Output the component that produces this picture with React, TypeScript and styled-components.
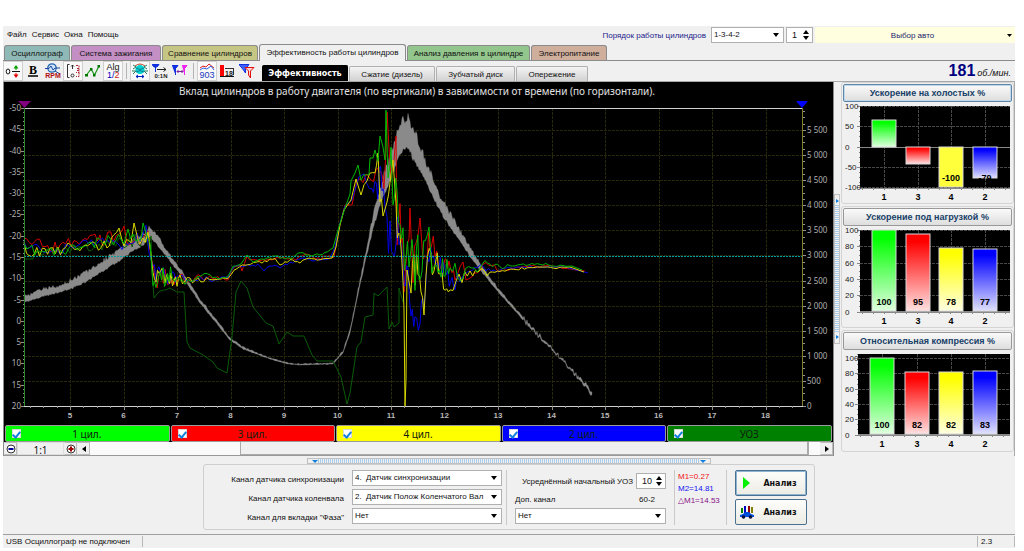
import React from "react";
import styled, { createGlobalStyle, css } from "styled-components";

const GlobalStyle = createGlobalStyle`
  * { box-sizing: border-box; }
  body { margin: 0; background: #fff; font-family: "Liberation Sans", Arial, sans-serif; font-size: 8px; color: #111; }
  button, select, input { font: inherit; color: inherit; margin: 0; }
  svg { display: block; }
`;

const Page = styled.div`padding: 26px 9px 4px 3px;`;
const AppWindow = styled.div`
  display: flex;
  flex-direction: column;
  background: #f0f0f0;
`;

/* ---------- menu row ---------- */
const TopRow = styled.header`
  display: flex;
  align-items: center;
  height: 18px;
`;
const Menu = styled.nav`
  display: flex;
  flex: 1;
  gap: 5px;
  padding-left: 4px;
`;
const MenuItem = styled.button`
  border: 0;
  padding: 0;
  background: none;
  line-height: 12px;
`;
const OrderLabel = styled.label`
  color: #1c1c8c;
  margin-right: 5px;
`;
const OrderFields = styled.div`
  display: flex;
  gap: 2px;
`;
const SelectBox = styled.div<{ $w?: number }>`
  position: relative;
  width: ${(p) => (p.$w ? p.$w + "px" : "100%")};
  height: 16px;
  &::after {
    content: "";
    position: absolute;
    right: 5px;
    top: 6px;
    border: 3px solid transparent;
    border-top: 4px solid #000;
    border-bottom: 0;
    pointer-events: none;
  }
`;
const Select = styled.select`
  appearance: none;
  display: block;
  width: 100%;
  height: 16px;
  padding: 0 12px 0 2px;
  border: 1px solid #b0b0b0;
  border-radius: 0;
  background: #fff;
  line-height: 14px;
`;
const SpinBox = styled.div<{ $w: number }>`
  display: flex;
  align-items: center;
  width: ${(p) => p.$w}px;
  height: 16px;
  padding: 0 3px 0 5px;
  border: 1px solid #b0b0b0;
  background: #fff;
`;
const SpinInput = styled.input`
  flex: 1;
  min-width: 0;
  width: 100%;
  border: 0;
  padding: 0;
  background: none;
  font-size: 9px;
  outline: none;
`;
const CarButton = styled.button`
  display: flex;
  align-items: center;
  width: 200px;
  height: 16px;
  padding: 0 3px;
  border: 0;
  border-radius: 2px 0 0 2px;
  background: #ffffe0;
  color: #1c1c6c;
  span { flex: 1; text-align: center; }
`;

/* ---------- tabs ---------- */
const TabRow = styled.div`
  display: flex;
  align-items: flex-end;
  gap: 1px;
  height: 17px;
  padding-left: 1px;
  border-bottom: 1px solid #8c8c8c;
`;
const Tab = styled.button<{ $w: number; $c: string; $on?: boolean }>`
  width: ${(p) => p.$w}px;
  height: 15px;
  padding: 0;
  border: 1px solid #8a8a8a;
  border-bottom: 0;
  border-radius: 3px 3px 0 0;
  background: ${(p) => p.$c};
  white-space: nowrap;
  ${(p) => p.$on && css`height: 17px; margin-bottom: -1px; padding-bottom: 2px;`}
`;

/* ---------- toolbar ---------- */
const Toolbar = styled.div`
  display: flex;
  align-items: stretch;
  height: 21px;
  border-bottom: 1px solid #a8a8a8;
`;
const Tool = styled.button<{ $on?: boolean }>`
  display: flex;
  align-items: center;
  justify-content: center;
  width: 20px;
  padding: 0;
  border: 1px solid ${(p) => (p.$on ? "#d0d0d0" : "transparent")};
  background: ${(p) => (p.$on ? "#f9f9f9" : "none")};
`;
const ToolGap = styled.div`
  width: 1px;
  margin: 2px 3px;
  background: #b4b4b4;
`;
const SubTabs = styled.div`
  display: flex;
  flex: 1;
  align-items: flex-end;
  gap: 1px;
  padding-left: 5px;
`;
const SubTab = styled.button<{ $w: number; $on?: boolean }>`
  width: ${(p) => p.$w}px;
  height: 15px;
  padding: 0;
  border: 1px solid #b0b0b0;
  border-bottom: 0;
  border-radius: 2px 2px 0 0;
  background: linear-gradient(#f4f4f4, #d2d2d2);
  ${(p) => p.$on && css`
    height: 16px;
    border-color: #000;
    background: #000;
    color: #fff;
    font: bold 8px "DejaVu Sans", sans-serif;
  `}
`;
const Rpm = styled.div`
  display: flex;
  align-items: baseline;
  gap: 2px;
  padding-right: 4px;
  font-size: 9px;
  font-style: italic;
  b { font-size: 16px; line-height: 20px; color: #000080; font-style: normal; }
`;

/* ---------- main area ---------- */
const Main = styled.main`
  display: flex;
  align-items: stretch;
`;
const ChartColumn = styled.section`
  flex: 1;
  min-width: 0;
  border-left: 1px solid #8c8c8c;
  border-right: 1px solid #8c8c8c;
`;
const Black = styled.div`background: #000;`;
const Legend = styled.div`
  display: flex;
  gap: 1px;
  padding: 1px 1px 0;
`;
const LegendItem = styled.label<{ $c: string }>`
  display: flex;
  flex: 1;
  align-items: center;
  height: 17px;
  padding: 0 6px;
  border: 1px solid #9a9a9a;
  border-radius: 2px;
  background: ${(p) => p.$c};
  color: #102010;
  font: 10px "Noto Sans", sans-serif;
  span { flex: 1; text-align: center; padding-right: 10px; }
`;
const Check = styled.input`
  appearance: none;
  display: flex;
  justify-content: center;
  width: 9px;
  height: 9px;
  border: 1px solid #d8d8d8;
  background: #fff;
  &:checked::after {
    content: "";
    width: 3px;
    height: 6px;
    border: solid #1080e0;
    border-width: 0 2px 2px 0;
    transform: rotate(40deg);
  }
`;
const ScrollRow = styled.div`
  display: flex;
  height: 14px;
  border-bottom: 1px solid #999;
  background: #fafafa;
`;
const ZoomButton = styled.button`
  display: flex;
  align-items: center;
  justify-content: center;
  width: 13px;
  padding: 0;
  border: 1px solid #bbb;
  border-left-color: #eee;
  background: #f0f0f0;
`;
const ZoomValue = styled.output`
  width: 47px;
  text-align: center;
  background: #f0f0f0;
  border: 1px solid #ddd;
  font: 10px/14px "Noto Sans", sans-serif;
`;
const Track = styled.div`
  display: flex;
  flex: 1;
  padding-left: 150px;
  padding-right: 11px;
`;
const Thumb = styled.div`
  flex: 1;
  border: 1px solid #aaa;
  border-width: 0 2px 1px 1px;
  background: #f0f0f0;
`;
const SideSplit = styled.div`
  align-self: center;
  display: flex;
  flex-direction: column;
  justify-content: space-between;
  width: 6px;
  height: 150px;
  padding: 4px 1px;
  border: 1px solid #c0c0c0;
  background: linear-gradient(#f0f0f0, #f0f0f0) top / 100% 10px no-repeat,
    linear-gradient(#f0f0f0, #f0f0f0) bottom / 100% 10px no-repeat,
    repeating-linear-gradient(#a8cdec 0 1px, #f0f0f0 1px 2px);
`;
const SideArrow = styled.i`
  border: 2px solid transparent;
  border-left: 3px solid #1080e0;
  border-right: 0;
  width: 3px;
`;
const SidePanel = styled.aside`
  display: flex;
  flex-direction: column;
  gap: 2px;
  width: 175px;
  padding-left: 1px;
  border-right: 1px solid #aaa;
`;
const Card = styled.section`
  padding: 1px;
  border: 1px solid #d4d4d4;
  border-radius: 3px;
`;
const CardButton = styled.button<{ $on?: boolean }>`
  display: block;
  width: 100%;
  height: 18px;
  padding: 0;
  border: 1px solid ${(p) => (p.$on ? "#5f86a8" : "#999")};
  border-radius: 2px;
  background: linear-gradient(#fafafa, #dedede);
  box-shadow: ${(p) => (p.$on ? "inset 0 0 0 1px #c0d8ea" : "none")};
  color: #174068;
  font-weight: bold;
  font-size: 9px;
`;

/* ---------- bottom ---------- */
const BottomSplit = styled.div`
  align-self: center;
  display: flex;
  justify-content: space-between;
  width: 404px;
  height: 6px;
  margin: 2px 0 0;
  padding: 1px 4px;
  border: 1px solid #c0c0c0;
  background: linear-gradient(#f0f0f0, #f0f0f0) left / 10px 100% no-repeat,
    linear-gradient(#f0f0f0, #f0f0f0) right / 10px 100% no-repeat,
    repeating-linear-gradient(90deg, #a8cdec 0 1px, #f0f0f0 1px 2px);
`;
const DownArrow = styled.i`
  border: 3px solid transparent;
  border-top-color: #1080e0;
  border-bottom: 0;
  height: 3px;
`;
const Settings = styled.form`
  align-self: center;
  display: flex;
  align-items: stretch;
  height: 66px;
  margin-bottom: 4px;
  padding: 5px 7px 4px 6px;
  border: 1px solid #cfcfcf;
  border-radius: 3px;
`;
const Fields = styled.div`
  display: grid;
  grid-template-columns: 134px 150px;
  grid-auto-rows: 16px;
  gap: 3px 8px;
  align-items: center;
  margin-right: 4px;
  label { text-align: right; padding-top: 3px; }
`;
const Rule = styled.div`
  width: 1px;
  background: #cacaca;
`;
const Middle = styled.div`
  display: flex;
  flex-direction: column;
  width: 167px;
  padding: 2px 8px 0 8px;
`;
const MiddleRow = styled.div`
  display: flex;
  align-items: center;
  justify-content: space-between;
  height: 18px;
  padding-left: 7px;
  & + & { padding: 0 11px 0 0; }
`;
const Marks = styled.div`
  width: 51px;
  padding: 1px 0 0 3px;
  line-height: 12px;
`;
const Mark = styled.div<{ $c: string }>`color: ${(p) => p.$c}; white-space: nowrap;`;
const Actions = styled.div`
  display: flex;
  flex-direction: column;
  gap: 3px;
  padding-left: 8px;
`;
const Action = styled.button<{ $on?: boolean }>`
  display: flex;
  align-items: center;
  width: 72px;
  height: 26px;
  padding: 0 5px 0 4px;
  border: 1px solid #4a7090;
  border-radius: 2px;
  background: linear-gradient(#fdfdfb, #ecebe4);
  box-shadow: ${(p) => (p.$on ? "inset 0 0 0 1px #8fb4d4" : "none")};
  font: bold 8px "DejaVu Sans", sans-serif;
  span { flex: 1; text-align: center; padding-left: 5px; }
`;
const Status = styled.footer`
  display: flex;
  height: 14px;
  align-items: center;
  border-top: 1px solid #a0a0a0;
  line-height: 12px;
`;
const StatusCell = styled.div<{ $w?: number }>`
  ${(p) => (p.$w ? `width: ${p.$w}px;` : "flex: 1;")}
  height: 11px;
  padding-left: 3px;
  border-right: 1px solid #b8b8b8;
  white-space: nowrap;
`;

/* ---------- main chart data ---------- */
type P = [number, number, number?];

const rng = (seed: number) => () => {
  seed = (seed * 16807) % 2147483647;
  return seed / 2147483647;
};

/* Interpolates key points [x, y, spread] and adds noise inside the spread. */
const trace = (pts: P[], seed: number) => {
  const r = rng(seed);
  const out: string[] = [];
  for (let i = 0; i < pts.length - 1; i++) {
    const [x0, y0, a = 0] = pts[i];
    const [x1, y1, b = 0] = pts[i + 1];
    const step = a > 7 ? 1.5 : 2.7;
    const n = a || b ? Math.max(1, Math.round((x1 - x0) / step)) : 1;
    for (let k = 0; k < n; k++) {
      const t = k / n;
      const amp = (a + (b - a) * t) * 1.2;
      out.push(`${(x0 + (x1 - x0) * t).toFixed(1)} ${(y0 + (y1 - y0) * t + (r() * 2 - 1) * amp).toFixed(1)}`);
    }
  }
  const last = pts[pts.length - 1];
  out.push(`${last[0]} ${last[1]}`);
  return "M" + out.join("L");
};

/* Speed band: [x, top, bottom]. */
const band: [number, number, number][] = [
  [24, 297, 302], [45, 289, 296], [60, 286, 292], [70, 281, 289], [84, 274, 283], [100, 263, 273],
  [117, 252, 262], [133, 241, 251], [142, 234, 246], [150, 228, 238], [156, 234, 243], [167, 251, 257],
  [183, 273, 278], [200, 299, 303], [230, 338, 340], [243, 347, 349], [267, 357, 358], [287, 363, 364],
  [300, 364, 365], [333, 363, 364], [343, 351, 353], [350, 330, 333], [357, 295, 299], [367, 246, 254],
  [373, 217, 229], [380, 188, 205], [390, 158, 181], [397, 136, 162], [402, 125, 153], [406, 116, 147],
  [410, 124, 152], [417, 140, 166], [427, 165, 184], [440, 197, 211], [450, 214, 227], [467, 243, 252],
  [480, 264, 270], [500, 291, 294], [533, 329, 331], [560, 357, 358], [577, 375, 377], [588, 387, 390],
  [592, 393, 396], [593, 391, 394],
];
const bandPath = () => {
  const r = rng(77);
  const top: string[] = [];
  const bottom: string[] = [];
  for (let i = 0; i < band.length - 1; i++) {
    const [x0, a0, b0] = band[i];
    const [x1, a1, b1] = band[i + 1];
    for (let x = x0; x < x1; x += 1) {
      const t = (x - x0) / (x1 - x0);
      const a = a0 + (a1 - a0) * t;
      const b = b0 + (b1 - b0) * t;
      const j = 0.4 + (b - a) * 0.2;
      const shift = x > 520 ? (r() * 2 - 1) * 2 : 0;
      top.push(`${x} ${Math.max(108, a + shift + (r() * 2 - 1.2) * j).toFixed(1)}`);
      bottom.unshift(`${x} ${(b + shift + (r() * 2 - 1) * j * 0.5).toFixed(1)}`);
    }
  }
  return "M" + top.join("L") + "L" + bottom.join("L") + "Z";
};

const green: P[] = [
  [24, 249, 5], [40, 252, 5], [60, 252, 5], [80, 247, 4], [100, 243, 5], [124, 238, 5], [128, 230, 2], [133, 240, 5],
  [141, 236, 3], [143, 223], [147, 240, 5], [150, 240, 4], [153, 276, 9], [163, 278, 9], [172, 274, 6], [185, 281, 4],
  [197, 277, 1], [205, 274, 1], [218, 279, 1], [228, 277, 1], [233, 267, 1], [241, 264], [247, 255], [253, 261, 1],
  [275, 256, 1], [290, 259, 1], [300, 252, 1], [312, 256, 1], [325, 253, 1], [333, 248], [338, 230], [344, 211], [350, 194],
  [351, 181], [355, 173], [358, 165], [361, 178, 3], [369, 172, 2], [370, 158], [373, 158], [375, 150], [378, 161], [380, 136],
  [383, 147], [385, 160], [386, 110], [388, 178], [390, 165], [391, 147], [393, 205, 8], [397, 185, 18], [400, 225, 28],
  [406, 265, 22], [415, 258, 32], [422, 258, 24], [427, 250, 22], [429, 227], [432, 255, 18], [438, 272, 12], [450, 268, 7],
  [460, 274, 6], [480, 266, 4], [485, 262, 2], [500, 267, 2], [515, 265, 1], [540, 264, 1], [560, 266, 1], [572, 266], [582, 270],
];
const red: P[] = [
  [24, 243, 4], [32, 244, 4], [45, 245, 6], [60, 248, 5], [74, 240, 7], [90, 240, 5], [105, 240, 6], [122, 232, 5], [124, 226],
  [127, 244, 5], [137, 238, 7], [148, 233, 6], [151, 262, 6], [154, 278, 9], [165, 276, 9], [180, 280, 6], [195, 279, 4],
  [215, 278, 2], [228, 279, 1], [233, 267, 1], [240, 265], [242, 271], [247, 258, 2], [260, 261, 1], [280, 258, 1], [296, 259, 1],
  [305, 254, 1], [318, 258, 2], [334, 257, 1], [338, 232], [345, 205], [352, 205], [357, 182, 3], [366, 175, 5], [376, 170, 12],
  [384, 175, 12], [386, 150], [387, 112], [389, 148], [391, 178], [394, 160], [396, 136], [397, 245], [400, 215, 18], [404, 275, 18],
  [409, 240, 20], [410, 208], [413, 262, 18], [420, 218], [423, 250, 22], [430, 240, 16], [435, 262, 16], [440, 266, 9], [455, 272, 7],
  [463, 262], [466, 277, 5], [480, 268, 4], [486, 262, 2], [500, 270, 2], [520, 267, 1], [545, 266, 1], [562, 268, 1], [576, 270], [585, 271],
];
const yellow: P[] = [
  [24, 248, 5], [34, 252, 5], [45, 254, 6], [63, 248, 5], [68, 243], [75, 250, 3], [90, 245, 4], [107, 245, 6], [114, 238, 4],
  [119, 228], [124, 246, 5], [131, 240, 5], [134, 223], [137, 242, 7], [148, 238, 6], [153, 275, 8], [165, 280, 9], [180, 281, 6],
  [195, 280, 3], [215, 279, 2], [228, 279, 1], [234, 269, 1], [245, 264, 1], [262, 262, 1], [275, 258, 2], [280, 265], [290, 260, 2],
  [300, 262, 1], [309, 258], [320, 260, 1], [332, 258], [336, 247], [340, 225], [344, 210], [351, 200], [356, 179], [361, 195],
  [367, 180, 6], [375, 178, 14], [378, 153], [380, 195, 12], [383, 212, 5], [387, 205, 8], [393, 160], [396, 210, 10],
  [400, 255, 20], [403, 280, 12], [404, 310], [405, 406], [406, 380], [407, 270], [411, 285, 18], [418, 268, 22], [424, 315],
  [426, 265, 15], [434, 262, 14], [442, 276, 10], [450, 286, 7], [462, 277, 5], [478, 270, 4], [490, 274, 2], [505, 270, 1],
  [530, 268, 1], [545, 267], [556, 268, 1], [570, 267], [584, 272],
];
const blue: P[] = [
  [24, 246, 4], [40, 250, 6], [60, 251, 5], [80, 246, 4], [100, 241, 4], [110, 240, 3], [122, 246, 6], [135, 240, 7],
  [142, 238, 6], [146, 225], [149, 250, 6], [153, 272, 9], [165, 278, 8], [180, 279, 6], [195, 280, 3], [215, 279, 2],
  [228, 277, 1], [234, 267, 1], [245, 265, 1], [258, 265, 1], [264, 271], [270, 265, 1], [280, 267, 1], [295, 261, 1], [302, 258],
  [312, 260, 1], [330, 259, 1], [335, 247], [340, 223], [345, 206], [352, 200], [359, 178, 2], [364, 178, 7], [372, 182, 16],
  [382, 182, 16], [385, 205, 12], [387, 235, 22], [396, 235, 22], [402, 262, 20], [404, 300, 15], [408, 262, 12], [411, 312, 12],
  [415, 320, 10], [420, 318, 10], [424, 295, 14], [429, 255, 14], [437, 252, 12], [442, 270, 9], [455, 283, 7], [465, 272, 5],
  [480, 268, 3], [497, 271, 2], [510, 268, 1], [530, 267, 1], [550, 267], [565, 267], [588, 273],
];
const timing: P[] = [
  [24, 259], [33, 259], [35, 254, 4], [70, 252, 4], [110, 244, 4], [135, 240, 6], [151, 240, 6], [152, 270], [154, 298], [158, 292, 1],
  [166, 290, 1], [170, 288], [177, 292], [184, 292], [187, 342], [190, 348], [203, 355], [213, 362], [217, 368], [227, 373],
  [232, 337], [236, 292], [241, 281], [247, 288], [253, 307], [266, 323], [273, 326], [279, 344], [287, 332], [293, 336],
  [304, 336], [312, 355], [317, 361], [333, 361], [341, 377], [347, 404], [350, 393], [357, 347], [361, 342], [365, 317],
  [373, 315], [374, 293], [378, 296], [387, 287], [389, 329], [392, 322], [394, 327], [399, 323], [399, 288], [403, 302],
];

const range = (n: number) => Array.from({ length: n }, (_, i) => i);

const MainChart = () => (
  <svg width="100%" viewBox="4 82 829 342" role="img" aria-label="Вклад цилиндров">
    <rect x="4" y="82" width="829" height="342" fill="#000" />
    <text x="417" y="95" textAnchor="middle" fill="#e0e0e0" fontFamily="Noto Sans" fontSize="10">
      Вклад цилиндров в работу двигателя (по вертикали) в зависимости от времени (по горизонтали).
    </text>
    <g stroke="#27270a" strokeDasharray="3 1" shapeRendering="crispEdges">
      {range(14).map((i) => <line key={i} x1={Math.round(70 + 53.5 * i) + 0.5} x2={Math.round(70 + 53.5 * i) + 0.5} y1="108" y2="406" />)}
      {range(11).map((i) => <line key={i} y1={Math.round(380.9 - 25.1 * i) + 0.5} y2={Math.round(380.9 - 25.1 * i) + 0.5} x1="24" x2="803" />)}
    </g>
    <path d={bandPath()} fill="#8a8a8a" stroke="#8a8a8a" strokeWidth="0.3" />
    <g fill="none" strokeWidth="1" strokeLinejoin="round">
      <path d={trace(timing, 3)} stroke="#0a5c0a" />
      <path d={trace(red, 23)} stroke="#d80000" />
      <path d={trace(blue, 51)} stroke="#0000e6" />
      <path d={trace(yellow, 37)} stroke="#d8d800" />
      <path d={trace(green, 11)} stroke="#00b800" />
    </g>
    <line x1="24" x2="803" y1="256.5" y2="256.5" stroke="#00a0a0" strokeDasharray="2 1" />
    <g shapeRendering="crispEdges">
      <path d="M24 108.5H803M24 406.5H803" stroke="#d0d0d0" />
      <path d="M24.5 108V406" stroke="#2c8a2c" />
      <path d="M802.5 108V406" stroke="#80802c" />
      <g stroke="#909090">
        {range(71).map((i) => {
          const y = Math.round(108 + 4.257 * i) + 0.5;
          return <line key={i} x1={i % 5 ? 23 : 21} x2="24" y1={y} y2={y} />;
        })}
        {range(48).map((i) => {
          const y = Math.round(406 - 6.275 * i) + 0.5;
          return <line key={i} x1="803" x2={i % 4 ? 805 : 806} y1={y} y2={y} />;
        })}
        {range(58).map((i) => {
          const x = Math.round(29.9 + 13.375 * i) + 0.5;
          return <line key={i} x1={x} x2={x} y1="406" y2={i % 4 === 3 ? 410 : 408} />;
        })}
      </g>
    </g>
    <g fill="#b0b0b0" fontFamily="Noto Sans" fontSize="8">
      {range(15).map((i) => <text key={i} x="21" y={111 + 21.286 * i} textAnchor="end">{i * 5 - 50}</text>)}
      {range(12).map((i) => (
        <text key={i} x="807" y={409 - 25.1 * i}>{i > 1 ? `${Math.floor(i / 2)} ${i % 2 ? "500" : "000"}` : i * 500}</text>
      ))}
    </g>
    <g fill="#b8b8b8" fontFamily="Liberation Sans" fontSize="8" fontWeight="bold" textAnchor="middle">
      {range(14).map((i) => <text key={i} x={70 + 53.5 * i} y="418">{i + 5}</text>)}
    </g>
    <path d="M18 101H31L24.500 108Z" fill="#800080" />
    <path d="M796 101H808L802 108Z" fill="#0000ff" />
  </svg>
);

/* ---------- bar charts ---------- */
const barColors = ["#00ff00", "#ff0000", "#ffff00", "#0000ff"];
const cylinders = ["1", "3", "4", "2"];

type BarProps = {
  id: string;
  left: number;
  top: number;
  bottom: number;
  base: number;
  ticks: [string, number][];
  bars: { x: number; y: number; label: string }[];
};

const BarChart = ({ id, left, top, bottom, base, ticks, bars }: BarProps) => (
  <svg width="100%" viewBox="0 0 169 100" role="img" aria-label={id}>
    <defs>
      {barColors.map((c, i) => (
        <linearGradient key={c} id={`${id}${i}`} x1="0" y1="0" x2="0" y2="1">
          <stop offset="0.1" stopColor={c} />
          <stop offset="1" stopColor={c} stopOpacity="0.12" />
        </linearGradient>
      ))}
      <clipPath id={`${id}c`}><rect x={left} y={top} width={167 - left} height={bottom - top} /></clipPath>
    </defs>
    <rect x={left} y={top} width={167 - left} height={bottom - top} fill="#000" />
    <g stroke="#484848" strokeDasharray="3 1" shapeRendering="crispEdges">
      {ticks.map(([t, y]) => <line key={t} x1={left} x2="167" y1={y + 0.5} y2={y + 0.5} />)}
      {bars.map((b) => <line key={b.x} x1={b.x + 0.5} x2={b.x + 0.5} y1={top} y2={bottom} />)}
    </g>
    <g stroke="#888" shapeRendering="crispEdges">
      <line x1={left} x2="167" y1={base + 0.5} y2={base + 0.5} />
      <line x1={left} x2="167" y1={bottom + 0.5} y2={bottom + 0.5} />
      {ticks.map(([t, y]) => <line key={t} x1={left - 3} x2={left} y1={y + 0.5} y2={y + 0.5} />)}
      {range(14).map((i) => <line key={i} x1={left + 2 + i * 11} x2={left + 2 + i * 11} y1={bottom} y2={bottom + 2} />)}
      {range(16).map((i) => {
        const y = top + (i * (bottom - top)) / 16;
        return <line key={i} x1={left - 1} x2={left} y1={y} y2={y} />;
      })}
    </g>
    {bars.map((b, i) => {
      const y = Math.min(b.y, base);
      const height = Math.abs(base - b.y);
      return (
        <g key={b.x}>
          <rect x={b.x - 12} y={y} width="24" height={height} fill="#fff" />
          <rect x={b.x - 12} y={y} width="24" height={height} fill={b.label === "-100" ? "#ffff3c" : `url(#${id}${i})`} stroke="#d8d8d8" />
        </g>
      );
    })}
    <g fontFamily="Liberation Sans" fontWeight="bold" fontSize="9" textAnchor="middle" fill="#000">
      <g clipPath={`url(#${id}c)`}>
        {bars.map((b) => <text key={b.x} x={b.x} y={bottom - 7}>{b.label}</text>)}
      </g>
      {bars.map((b, i) => <text key={b.x} x={b.x} y={bottom + 12}>{cylinders[i]}</text>)}
    </g>
    <g fontFamily="Liberation Sans" fontSize="8" fill="#222">
      {ticks.map(([t, y]) => <text key={t} x="2" y={y + 3}>{t}</text>)}
    </g>
  </svg>
);

/* ---------- toolbar icons ---------- */
const iconText = { fontFamily: "Liberation Sans", fontWeight: "bold" as const };
const Icon = ({ children }: { children: React.ReactNode }) => (
  <svg width="16" height="16" viewBox="0 0 16 16" fill="none">{children}</svg>
);
const icons = {
  zero: <Icon><ellipse cx="3" cy="8.500" rx="1.800" ry="2.500" stroke="#111" /><path d="M7 8.500H15" stroke="#111" /><path d="M11 7V3" stroke="#00a000" /><path d="M8.500 5.500L11 2L13.500 5.500Z" fill="#00a000" /><path d="M11 10V13" stroke="#e00000" /><path d="M8.500 11.500L11 15L13.500 11.500Z" fill="#e00000" /></Icon>,
  bold: <Icon><text x="8" y="11" textAnchor="middle" fontFamily="Liberation Serif" fontWeight="bold" fontSize="12" fill="#000">B</text><path d="M3 13H13" stroke="#000" strokeWidth="1.500" /></Icon>,
  rpm: <Icon><circle cx="7" cy="5" r="4.200" stroke="#2868b0" strokeWidth="1.300" fill="#cfe4f8" /><path d="M0 5.500H4L6 3L8 7L10 5H15M10 8L15 11" stroke="#1848a0" /><text x="8" y="15" textAnchor="middle" {...iconText} fontSize="7" fill="#b01010">RPM</text></Icon>,
  range: <Icon><path d="M4.500 1.500H2.500V14.500H4.500" stroke="#333" /><path d="M7.500 6V2M6 3.500L7.500 2L9 3.500" stroke="#333" /><circle cx="7.500" cy="12.500" r="1.500" stroke="#333" /><path d="M11 2.500H14V5.500H11M14 5.500V9.500H11M14 9.500V13.500H11M12 7.500H14" stroke="#b02030" strokeDasharray="2 1" /></Icon>,
  line: <Icon><path d="M1.500 12L6 6L9.500 12L14 3" stroke="#1a9a1a" strokeWidth="1.200" /><path d="M0 11H3V13.500H0ZM5 5H7.500V7.500H5ZM8 11H10.500V13.500H8ZM12.500 2H15V4.500H12.500Z" fill="#007800" /></Icon>,
  alg: <Icon><text x="8" y="7" textAnchor="middle" fontFamily="Liberation Sans" fontSize="9" fill="#111">Alg</text><text x="2" y="15" fontFamily="Liberation Sans" fontSize="9" fill="#0000c0">1/<tspan fill="#d02020">2</tspan></text></Icon>,
  bug: <Icon><path d="M1 2L4 4L1 6M15 2L12 4L15 6M1 11L4 8M15 11L12 8M0 8H16" stroke="#208060" /><ellipse cx="8" cy="6.500" rx="4.500" ry="4.500" fill="#00d0d0" /><path d="M3 3Q8 -1 13 3" stroke="#c04020" /><path d="M4 5Q8 8 12 5M4 9Q8 6 12 9" stroke="#108090" /><path d="M4 13.500H12M6 12L4 13.500L6 15M10 12L12 13.500L10 15" stroke="#0020c0" /></Icon>,
  mins: <Icon><path d="M0 1.500H7L5 4H2ZM3.500 4V9" stroke="#1030e0" fill="#1030e0" /><path d="M5 6.500H14M11.500 4.500L14 6.500L11.500 8.500" stroke="#222" /><text x="9" y="15" textAnchor="middle" {...iconText} fontSize="6" fill="#222">0:1N</text></Icon>,
  tt: <Icon><path d="M0 2.500H6L4 5H3.500V12" stroke="#1030e0" fill="#1030e0" /><path d="M10 2.500H15L13 5H12.500V12" stroke="#f020f0" fill="#f020f0" /><path d="M5 8.500H11M6.500 7L5 8.500L6.500 10M9.500 7L11 8.500L9.500 10" stroke="#8020a0" /></Icon>,
  uoz: <Icon><path d="M1 5L4 3L7 4L10 1L15 5" stroke="#e02020" /><path d="M1 7L4 5L8 6L12 3L15 7" stroke="#3060e0" /><text x="8" y="15" textAnchor="middle" fontFamily="Liberation Sans" fontSize="9" fill="#2038c0">903</text></Icon>,
  bars: <Icon><path d="M1 2H5V13H1Z" fill="#ff0000" /><path d="M1 13.500H15" stroke="#111" /><path d="M6 5.500H15M14.500 6V12" stroke="#333" /><text x="6" y="13" {...iconText} fontSize="7" fill="#222">18</text></Icon>,
  filter: <Icon><path d="M0 1.500H10L6.500 6V10L4.500 7Z" stroke="#1030e0" fill="#4060ff" /><path d="M6 4.500H15L11.500 8V15L9.500 12V8Z" stroke="#e01010" fill="#ffd0d0" /></Icon>,
};

const Spin = () => (
  <svg width="6" height="10" viewBox="0 0 6 10">
    <path d="M0 4L3 0L6 4ZM0 6H6L3 10Z" fill="#000" />
  </svg>
);

const App = () => (
  <>
    <GlobalStyle />
    <Page>
      <AppWindow>
        <TopRow>
          <Menu>
            {["Файл", "Сервис", "Окна", "Помощь"].map((m) => <MenuItem key={m}>{m}</MenuItem>)}
          </Menu>
          <OrderLabel htmlFor="order">Порядок работы цилиндров</OrderLabel>
          <OrderFields>
            <SelectBox $w={73}><Select id="order"><option>1-3-4-2</option></Select></SelectBox>
            <SpinBox $w={27}>
              <SpinInput aria-label="Номер цилиндра" defaultValue="1" />
              <Spin />
            </SpinBox>
            <CarButton>
              <span>Выбор авто</span>
              <svg width="5" height="3"><path d="M0 0H5L2.500 3Z" fill="#000" /></svg>
            </CarButton>
          </OrderFields>
        </TopRow>
        <TabRow>
          <Tab $w={66} $c="#8fb9b6">Осциллограф</Tab>
          <Tab $w={90} $c="#c48fc4">Система зажигания</Tab>
          <Tab $w={96} $c="#c6c684">Сравнение цилиндров</Tab>
          <Tab $w={147} $c="#f0f0f0" $on>Эффективность работы цилиндров</Tab>
          <Tab $w={123} $c="#92c68c">Анализ давления в цилиндре</Tab>
          <Tab $w={76} $c="#cfae9c">Электропитание</Tab>
        </TabRow>
        <Toolbar>
          <Tool $on aria-label="Ноль">{icons.zero}</Tool>
          <Tool aria-label="Толщина">{icons.bold}</Tool>
          <Tool aria-label="Обороты">{icons.rpm}</Tool>
          <Tool $on aria-label="Диапазон">{icons.range}</Tool>
          <Tool aria-label="График">{icons.line}</Tool>
          <Tool $on aria-label="Алгоритм">{icons.alg}</Tool>
          <ToolGap />
          <Tool $on aria-label="Датчик">{icons.bug}</Tool>
          <Tool aria-label="Мин">{icons.mins}</Tool>
          <Tool aria-label="Маркеры">{icons.tt}</Tool>
          <ToolGap />
          <Tool $on aria-label="УОЗ">{icons.uoz}</Tool>
          <Tool aria-label="Столбцы">{icons.bars}</Tool>
          <Tool aria-label="Фильтр">{icons.filter}</Tool>
          <SubTabs>
            <SubTab $w={86} $on>Эффективность</SubTab>
            <SubTab $w={86}>Сжатие (дизель)</SubTab>
            <SubTab $w={79}>Зубчатый диск</SubTab>
            <SubTab $w={72}>Опережение</SubTab>
          </SubTabs>
          <Rpm><b>181</b>об./мин.</Rpm>
        </Toolbar>
        <Main>
          <ChartColumn>
            <Black>
              <MainChart />
              <Legend>
                {[["1 цил.", "#00ff00"], ["3 цил.", "#ff0000"], ["4 цил.", "#ffff00"], ["2 цил.", "#0000ff"], ["УОЗ", "#008000"]].map(([t, c]) => (
                  <LegendItem key={t} $c={c}>
                    <Check type="checkbox" defaultChecked />
                    <span>{t}</span>
                  </LegendItem>
                ))}
              </Legend>
            </Black>
            <ScrollRow>
              <ZoomButton aria-label="Уменьшить">
                <svg width="10" height="10"><circle cx="5" cy="5" r="4" fill="#fff" stroke="#333" /><path d="M2.500 5H7.500" stroke="#0000a0" strokeWidth="2" /></svg>
              </ZoomButton>
              <ZoomValue>1:1</ZoomValue>
              <ZoomButton aria-label="Увеличить">
                <svg width="10" height="10"><circle cx="5" cy="5" r="4" fill="#fff" stroke="#333" /><path d="M2.500 5H7.500M5 2.500V7.500" stroke="#a00000" strokeWidth="2" /></svg>
              </ZoomButton>
              <ZoomButton aria-label="Влево"><svg width="4" height="6"><path d="M4 0V6L0 3Z" fill="#000" /></svg></ZoomButton>
              <Track><Thumb /></Track>
              <ZoomButton aria-label="Вправо"><svg width="4" height="6"><path d="M0 0V6L4 3Z" fill="#000" /></svg></ZoomButton>
            </ScrollRow>
          </ChartColumn>
          <SideSplit role="separator"><SideArrow /><SideArrow /></SideSplit>
          <SidePanel>
            <Card>
              <CardButton $on>Ускорение на холостых %</CardButton>
              <BarChart id="idle" left={17} top={4} bottom={86} base={45}
                ticks={[["100", 4], ["50", 24], ["0", 45], ["-50", 65], ["-100", 85]]}
                bars={[{ x: 41, y: 18, label: "" }, { x: 75, y: 62, label: "" }, { x: 108, y: 85, label: "-100" }, { x: 142, y: 76, label: "-79" }]} />
            </Card>
            <Card>
              <CardButton>Ускорение под нагрузкой %</CardButton>
              <BarChart id="load" left={17} top={4} bottom={86} base={85}
                ticks={[["100", 4], ["80", 20], ["60", 37], ["40", 53], ["20", 69], ["0", 86]]}
                bars={[{ x: 41, y: 4, label: "100" }, { x: 75, y: 8, label: "95" }, { x: 108, y: 22, label: "78" }, { x: 142, y: 23, label: "77" }]} />
            </Card>
            <Card>
              <CardButton>Относительная компрессия %</CardButton>
              <BarChart id="comp" left={15} top={4} bottom={85} base={84}
                ticks={[["100", 8], ["80", 23], ["60", 39], ["40", 54], ["20", 69], ["0", 85]]}
                bars={[{ x: 39, y: 8, label: "100" }, { x: 74, y: 22, label: "82" }, { x: 108, y: 22, label: "82" }, { x: 142, y: 21, label: "83" }]} />
            </Card>
          </SidePanel>
        </Main>
        <BottomSplit role="separator"><DownArrow /><DownArrow /></BottomSplit>
        <Settings>
          <Fields>
            <label htmlFor="sync">Канал датчика синхронизации</label>
            <SelectBox><Select id="sync"><option>{"4.\u00a0\u00a0Датчик синхронизации"}</option></Select></SelectBox>
            <label htmlFor="crank">Канал датчика коленвала</label>
            <SelectBox><Select id="crank"><option>{"2.\u00a0\u00a0Датчик Полож Коленчатого Вал"}</option></Select></SelectBox>
            <label htmlFor="phase">Канал для вкладки "Фаза"</label>
            <SelectBox><Select id="phase"><option>Нет</option></Select></SelectBox>
          </Fields>
          <Rule />
          <Middle>
            <MiddleRow>
              <label htmlFor="uoz">Усреднённый начальный УОЗ</label>
              <SpinBox $w={30}><SpinInput id="uoz" defaultValue="10" /><Spin /></SpinBox>
            </MiddleRow>
            <MiddleRow>
              <label htmlFor="extra">Доп. канал</label>
              <span>60-2</span>
            </MiddleRow>
            <SelectBox $w={151}><Select id="extra"><option>Нет</option></Select></SelectBox>
          </Middle>
          <Rule />
          <Marks>
            <Mark $c="#f01010">M1=0.27</Mark>
            <Mark $c="#1010f0">M2=14.81</Mark>
            <Mark $c="#881088">△M1=14.53</Mark>
          </Marks>
          <Rule />
          <Actions>
            <Action type="button" $on>
              <svg width="14" height="14"><path d="M3 1L10 7L3 13Z" fill="#00f000" /></svg>
              <span>Анализ</span>
            </Action>
            <Action type="button">
              <svg width="14" height="14" viewBox="0 0 14 14">
                <path d="M1 3H3V8H1Z" fill="#008000" /><path d="M4 1H6V8H4Z" fill="#0000c0" /><path d="M8 1H10V8H8Z" fill="#900000" /><path d="M11 2H13V8H11Z" fill="#808000" />
                <path d="M0 10L3 9L5 7H9L11 9L14 10V12H0Z" fill="#0050e0" /><circle cx="3.500" cy="12" r="1.800" fill="#101040" /><circle cx="10.500" cy="12" r="1.800" fill="#101040" />
              </svg>
              <span>Анализ</span>
            </Action>
          </Actions>
        </Settings>
        <Status>
          <StatusCell $w={140}>USB Осциллограф не подключен</StatusCell>
          <StatusCell />
          <StatusCell $w={37}>2.3</StatusCell>
        </Status>
      </AppWindow>
    </Page>
  </>
);

export default App;
